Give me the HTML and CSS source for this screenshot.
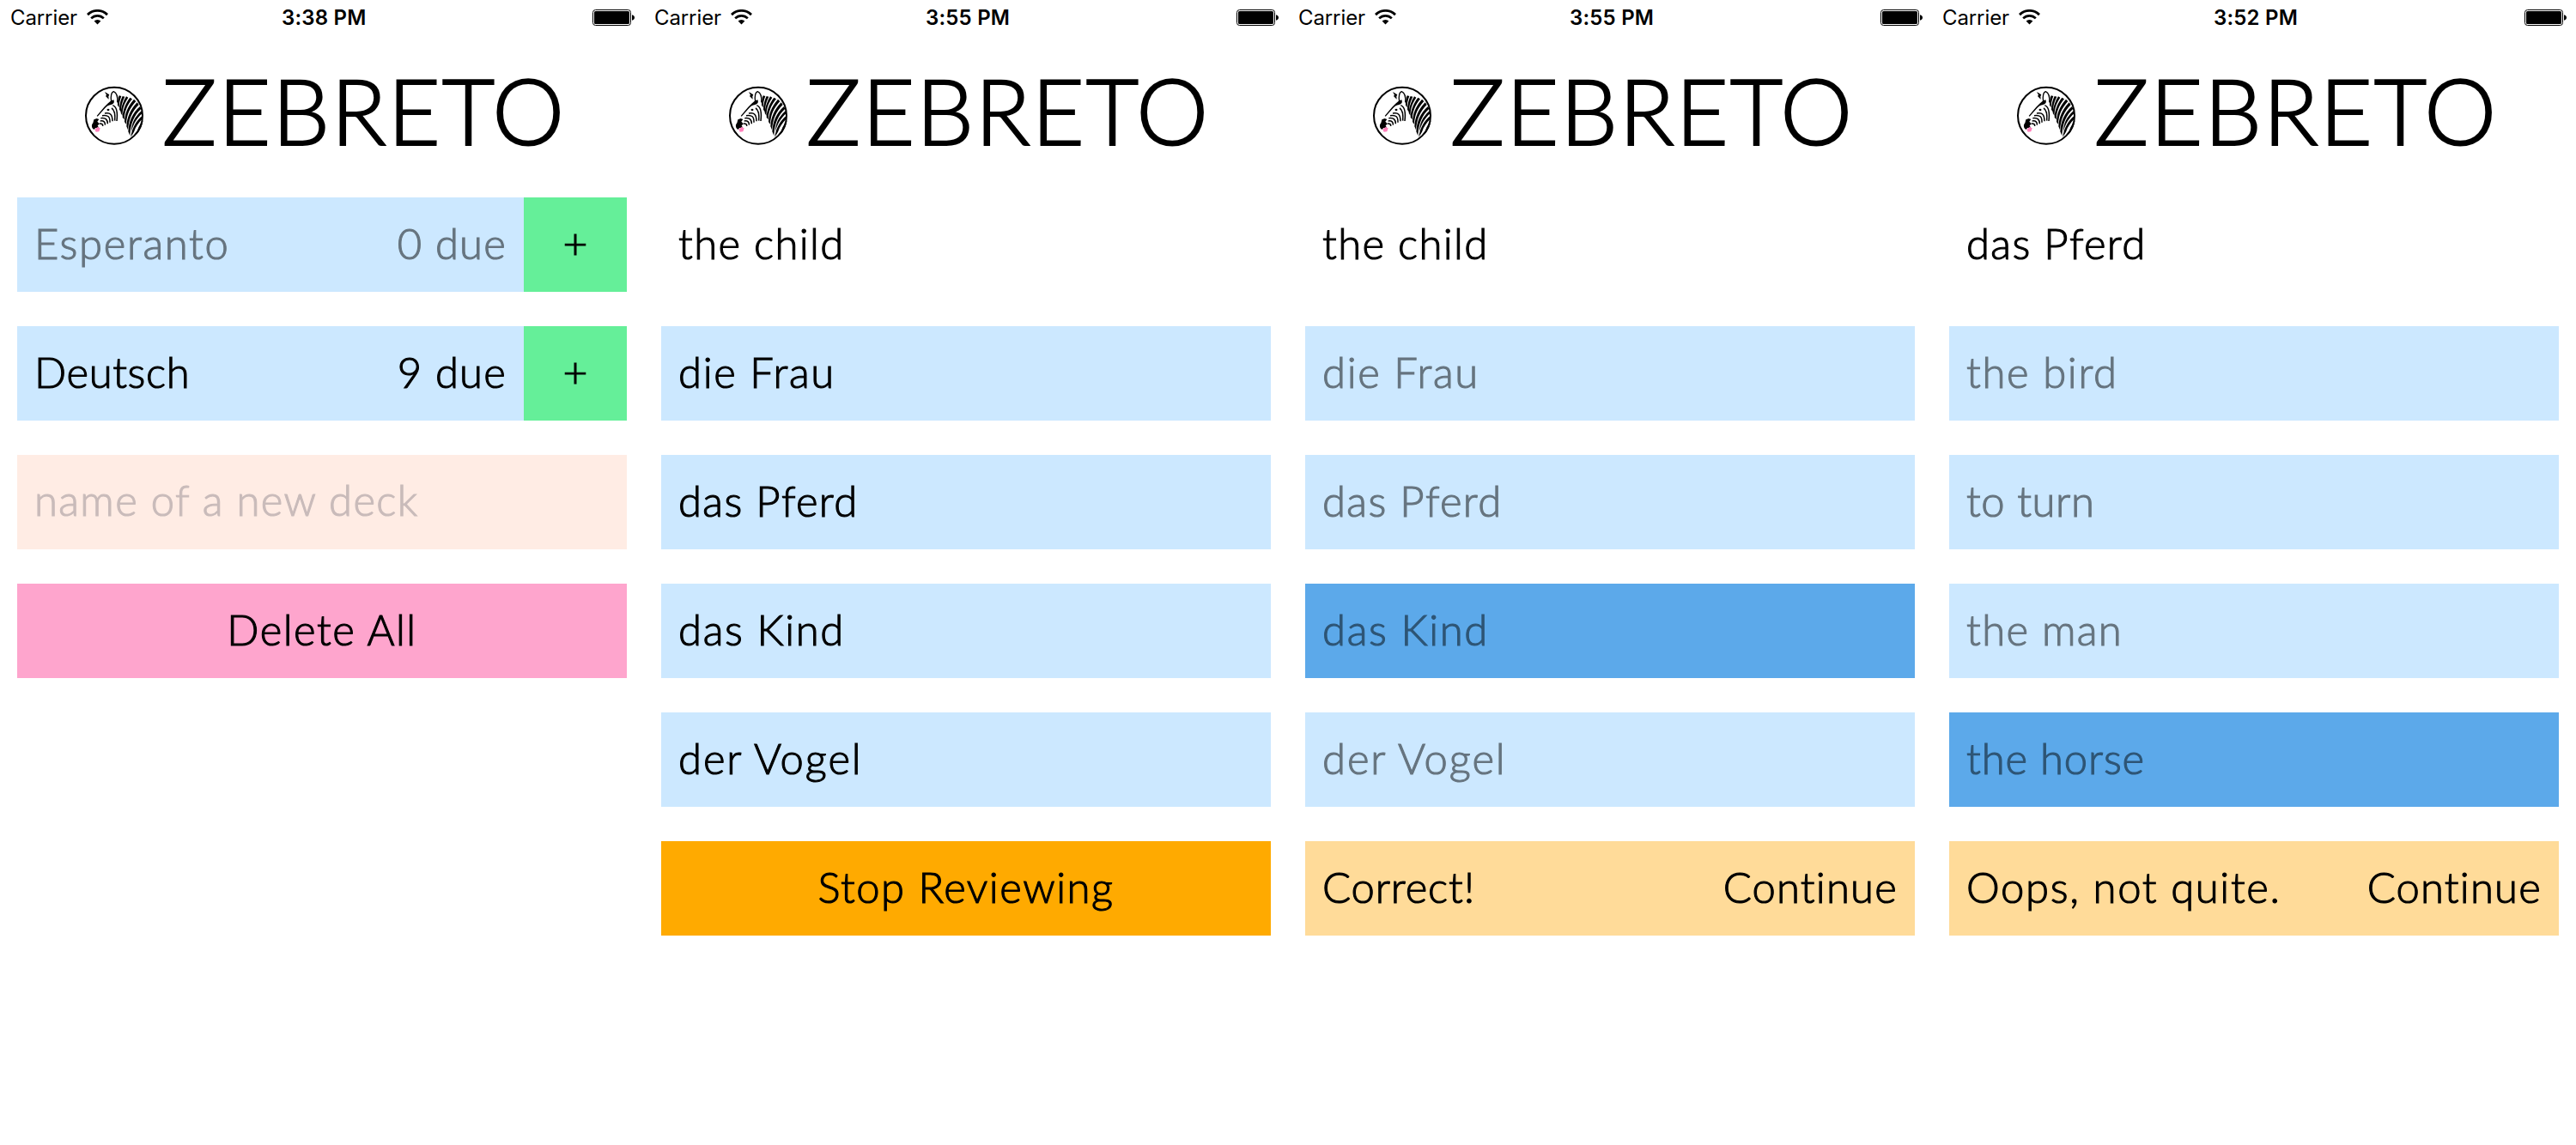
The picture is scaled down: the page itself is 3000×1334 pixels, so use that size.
FILE: index.html
```html
<!DOCTYPE html>
<html lang="en">
<head>
<meta charset="utf-8">
<title>Zebreto</title>
<link rel="stylesheet" href="styles.css">
</head>
<body>
<svg class="sprite" aria-hidden="true">
  <symbol id="wifi" viewBox="0 0 25 18">
    <path d="M1 6.100a16.400 16.400 0 0 1 23 0" fill="none" stroke="#000" stroke-width="2.900"/>
    <path d="M5.200 10.400a10.400 10.400 0 0 1 14.600 0" fill="none" stroke="#000" stroke-width="2.700"/>
    <path d="M8.600 13.500a5.600 5.600 0 0 1 7.800 0L12.500 17.600z"/>
  </symbol>
  <symbol id="battery" viewBox="0 0 49 19">
    <rect x=".5" y=".5" width="44" height="18" rx="3" fill="none" stroke="#000"/>
    <rect x="2" y="2" width="41" height="15" rx="1.600"/>
    <path d="M46 6.200c2 .5 3 1.700 3 3.300s-1 2.800-3 3.300z"/>
  </symbol>
  <symbol id="zebra" viewBox="24 30 210 210">
    <circle cx="129" cy="134.500" r="99" fill="none" stroke="#000" stroke-width="6"/>
    <path d="M96 51l16 10-3 6 1 10-11-11 3-4z"/>
    <path d="M119 86c-4-20 1-35 8-36 9 4 15 18 13 38" fill="none" stroke="#000" stroke-width="4"/>
    <path d="M118 82l9-3c4 9 0 15-9 17-9 1-15 5-21 12L71 137l-3-2 26-31 12-12z"/>
    <ellipse cx="108" cy="114" rx="4.500" ry="3.500"/>
    <g fill="none" stroke="#000" stroke-width="4.500">
      <path d="M124 98c13 5 18 22 14 55"/>
      <path d="M120 108c10 6 13 20 11 44"/>
      <path d="M96 126c19-4 27 4 27 28"/>
      <path d="M87 134c20-3 28 4 27 24"/>
      <path d="M82 143c18-2 24 5 24 20"/>
      <path d="M80 153c13-2 18 4 17 14"/>
      <path d="M78 162c8-1 12 3 11 9"/>
    </g>
    <path d="M58 148l10-4 8 3-6 8 8 8-7 6 4 7-11 1-6 6c-9-6-9-17-3-23z"/>
    <path d="M61 182l10-8 9 4-4 12-11 1z" fill="#ff80bb"/>
    <g>
      <path d="M146 64l8 2c-6 14-8 26-8 40l-5-8c-1-12 1-24 5-34z"/>
      <path d="M158 66l8 2c-10 18-13 34-13 54l-6-9c0-16 4-32 11-47z"/>
      <path d="M171 67l7 4c-15 22-21 42-20 64l-6-10c1-20 8-40 19-58z"/>
      <path d="M184 71l8 5c-18 22-27 44-28 72l-6-8c1-24 9-46 26-69z"/>
      <path d="M198 77l7 7c-22 24-32 46-34 80l-6-8c1-28 10-52 33-79z"/>
      <path d="M209 88l6 8c-24 24-35 50-38 88l-5-12c2-32 13-58 37-84z"/>
      <path d="M219 102l4 8c-25 24-36 48-39 94l-6-14c2-36 14-64 41-88z"/>
      <path d="M224 118l3 8c-20 18-32 38-38 66 0-28 10-52 35-74z"/>
      <path d="M228 134v11c-14 14-24 28-30 46l-11 18c4-30 18-58 41-75z"/>
      <path d="M229 152c-2 18-10 34-22 48 2-18 10-34 22-48z"/>
    </g>
  </symbol>
</svg>

<main class="screens">
  <section class="screen">
    <div class="status">
      <div class="signal">Carrier<svg class="wifi"><use href="#wifi"/></svg></div>
      <span class="time">3:38 PM</span>
      <svg class="battery"><use href="#battery"/></svg>
    </div>
    <header class="brand"><svg class="logo"><use href="#zebra"/></svg><h1>ZEBRETO</h1></header>
    <div class="rows">
      <div class="deck">
        <div class="row blue faded"><span class="track-5">Esperanto</span><span class="track-3">0 due</span></div>
        <div class="add">+</div>
      </div>
      <div class="deck">
        <div class="row blue"><span class="track-1">Deutsch</span><span class="track-3">9 due</span></div>
        <div class="add">+</div>
      </div>
      <div class="row field"><span class="track-3b">name of a new deck</span></div>
      <div class="row pink center"><span class="track-4">Delete All</span></div>
    </div>
  </section>

  <section class="screen">
    <div class="status">
      <div class="signal">Carrier<svg class="wifi"><use href="#wifi"/></svg></div>
      <span class="time">3:55 PM</span>
      <svg class="battery"><use href="#battery"/></svg>
    </div>
    <header class="brand"><svg class="logo"><use href="#zebra"/></svg><h1>ZEBRETO</h1></header>
    <div class="rows">
      <div class="row"><span class="track-3b">the child</span></div>
      <div class="row blue"><span class="track-5">die Frau</span></div>
      <div class="row blue"><span class="track-3b">das Pferd</span></div>
      <div class="row blue"><span class="track-5">das Kind</span></div>
      <div class="row blue"><span class="track-6">der Vogel</span></div>
      <div class="row orange center"><span class="track-4">Stop Reviewing</span></div>
    </div>
  </section>

  <section class="screen">
    <div class="status">
      <div class="signal">Carrier<svg class="wifi"><use href="#wifi"/></svg></div>
      <span class="time">3:55 PM</span>
      <svg class="battery"><use href="#battery"/></svg>
    </div>
    <header class="brand"><svg class="logo"><use href="#zebra"/></svg><h1>ZEBRETO</h1></header>
    <div class="rows">
      <div class="row"><span class="track-3b">the child</span></div>
      <div class="row blue faded"><span class="track-5">die Frau</span></div>
      <div class="row blue faded"><span class="track-3b">das Pferd</span></div>
      <div class="row chosen faded"><span class="track-5">das Kind</span></div>
      <div class="row blue faded"><span class="track-6">der Vogel</span></div>
      <div class="row amber"><span class="track-2">Correct!</span><span class="track-3">Continue</span></div>
    </div>
  </section>

  <section class="screen">
    <div class="status">
      <div class="signal">Carrier<svg class="wifi"><use href="#wifi"/></svg></div>
      <span class="time">3:52 PM</span>
      <svg class="battery"><use href="#battery"/></svg>
    </div>
    <header class="brand"><svg class="logo"><use href="#zebra"/></svg><h1>ZEBRETO</h1></header>
    <div class="rows">
      <div class="row"><span class="track-3b">das Pferd</span></div>
      <div class="row blue faded"><span class="track-5">the bird</span></div>
      <div class="row blue faded"><span class="track-1">to turn</span></div>
      <div class="row blue faded"><span class="track-3b">the man</span></div>
      <div class="row chosen faded"><span class="track-2">the horse</span></div>
      <div class="row amber"><span class="track-5">Oops, not quite.</span><span class="track-3">Continue</span></div>
    </div>
  </section>
</main>
</body>
</html>
```
FILE: styles.css
```css
* { box-sizing: border-box; }

body {
  margin: 0;
  background: #fff;
  color: #000;
  font-family: Lato, "Open Sans", sans-serif;
}

.sprite { display: none; }

.screens {
  display: grid;
  grid-template-columns: repeat(4, 750px);
  height: 1334px;
}

/* Status bar */
.status {
  display: grid;
  grid-template-columns: 316px auto 1fr;
  align-items: start;
  height: 40px;
  padding: 0 11px 0 12px;
  font: 400 24px/41px Inter, sans-serif;
}

.signal {
  display: flex;
  gap: 11px;
  letter-spacing: -0.1px;
}

.wifi {
  width: 25px;
  height: 18px;
  margin-top: 11px;
}

.time {
  font-weight: 600;
  letter-spacing: 0.2px;
}

.battery {
  width: 49px;
  height: 19px;
  margin-top: 11px;
  justify-self: end;
}

/* Logo and name */
.brand {
  display: flex;
  height: 190px;
  padding: 24px 0 0 98px;
  gap: 21px;
}

.logo {
  width: 70px;
  height: 70px;
  margin-top: 36px;
}

h1 {
  margin: 0;
  font-size: 106px;
  font-weight: 300;
  line-height: 128px;
  letter-spacing: 1.6px;
  -webkit-text-stroke: 2px #000;
}

/* Cards */
.rows {
  display: flex;
  flex-direction: column;
  gap: 40px;
  padding: 0 20px;
}

.row {
  display: flex;
  justify-content: space-between;
  height: 110px;
  padding: 0 20px;
  font-size: 49px;
  font-weight: 300;
  line-height: 106px;
  white-space: nowrap;
  -webkit-text-stroke: 1.1px currentColor;
}

.deck { display: flex; }
.deck .row { flex: 1; }

.add {
  width: 120px;
  height: 110px;
  background: #65ef99;
  font-size: 50px;
  font-weight: 300;
  line-height: 107px;
  text-align: center;
  -webkit-text-stroke: 1.1px currentColor;
}

.center { justify-content: center; }
.blue { background: #cce8ff; }
.chosen { background: #5ca9ea; }
.pink { background: #fea5cd; }
.orange { background: #ffaa00; }
.amber { background: #ffdb99; }
.field { background: #ffece4; color: #c9bbba; line-height: 105px; }
.faded { color: #66747f; }
.chosen.faded { color: #2e5575; }

/* Letter spacing steps */
.track-1 { letter-spacing: 0.6px; }
.track-2 { letter-spacing: 0.85px; }
.track-3 { letter-spacing: 1.2px; }
.track-3b { letter-spacing: 1.35px; }
.track-4 { letter-spacing: 1.5px; }
.track-5 { letter-spacing: 1.65px; }
.track-6 { letter-spacing: 1.9px; }
```
